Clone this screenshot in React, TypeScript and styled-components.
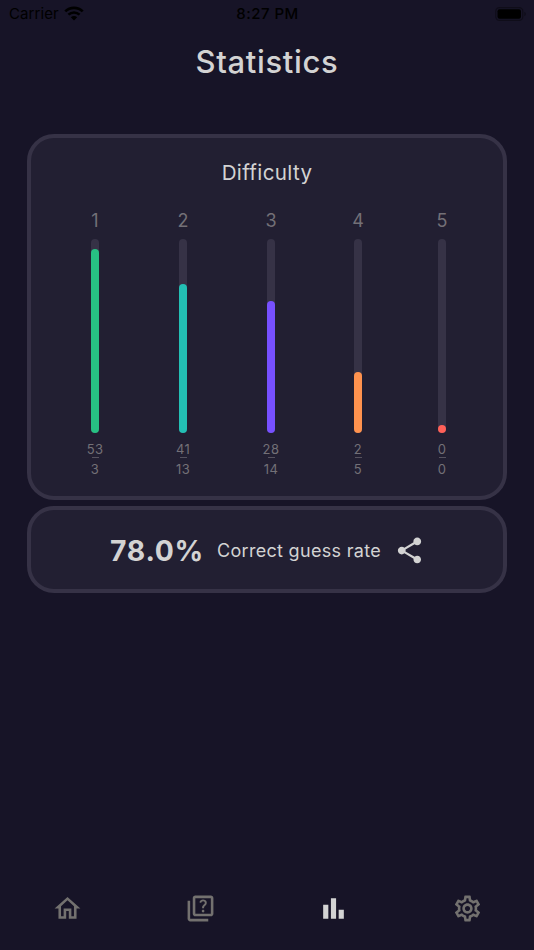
import React from 'react';
import styled, { createGlobalStyle } from 'styled-components';

const GlobalStyle = createGlobalStyle`
  * { box-sizing: border-box; }
  body { margin: 0; background: #171427; }
`;

const Screen = styled.div`
  width: 534px;
  height: 950px;
  overflow: hidden;
  display: flex;
  flex-direction: column;
  background: #171427;
  color: #d3d3d3;
  font-family: Inter, sans-serif;
`;

const StatusBar = styled.div`
  height: 27px;
  flex: none;
  padding: 0 8px 0 9px;
  display: grid;
  grid-template-columns: 1fr auto 1fr;
  align-items: center;
  color: #000;
  font-size: 15px;
  line-height: 27px;
`;

const Carrier = styled.div`
  display: flex;
  align-items: center;
  gap: 5px;
  letter-spacing: 0.1px;
`;

const Clock = styled.div`
  font-weight: 500;
  letter-spacing: 0.5px;
`;

const Battery = styled.div`
  display: flex;
  justify-content: flex-end;
`;

const Title = styled.h1`
  margin: 13px 0 0;
  height: 44px;
  flex: none;
  text-align: center;
  font-size: 31px;
  font-weight: 500;
  line-height: 44px;
  letter-spacing: 0.65px;
`;

const Cards = styled.main`
  margin: 50px 27px 0;
  display: flex;
  flex-direction: column;
  gap: 6px;
  flex: 1;
`;

const Card = styled.section`
  background: #221f32;
  border: 4px solid #363246;
  border-radius: 27px;
`;

const DifficultyCard = styled(Card)`
  height: 366px;
  padding-top: 23px;
`;

const CardTitle = styled.h2`
  margin: 0;
  text-align: center;
  font-size: 20.6px;
  font-weight: 400;
  line-height: 24px;
  letter-spacing: 0.35px;
`;

const Chart = styled.div`
  margin-top: 23px;
  padding-left: 20px;
  display: grid;
  grid-template-columns: 88px 88px 88px 86px 82px;
`;

const Level = styled.div`
  display: flex;
  flex-direction: column;
  align-items: center;
  color: #737077;
`;

const LevelName = styled.div`
  font-size: 18px;
  line-height: 25px;
`;

const Track = styled.div`
  margin-top: 6px;
  width: 8px;
  height: 194px;
  border-radius: 4px;
  background: #363246;
  display: flex;
  align-items: flex-end;
`;

const Fill = styled.div<{ $size: number; $color: string }>`
  width: 8px;
  height: ${(p) => p.$size}px;
  border-radius: 4px;
  background: ${(p) => p.$color};
`;

const Count = styled.div`
  font-size: 13px;
  line-height: 16px;
  letter-spacing: 0.4px;
`;

const Upper = styled(Count)`
  margin-top: 8px;
`;

const Divider = styled.div`
  width: 7px;
  height: 1px;
  background: #56525f;
  margin-bottom: 3px;
`;

const RateCard = styled(Card)`
  height: 87px;
  display: flex;
  align-items: center;
  padding: 2px 0 0 79px;
`;

const Rate = styled.div`
  width: 107px;
  font-size: 28.3px;
  font-weight: 700;
  letter-spacing: 0.75px;
`;

const RateLabel = styled.div`
  width: 177px;
  font-size: 18px;
  letter-spacing: 0.3px;
  white-space: nowrap;
`;

const NavBar = styled.nav`
  height: 84px;
  flex: none;
  padding-left: 0.5px;
  display: grid;
  grid-template-columns: repeat(4, 1fr);
`;

const NavItem = styled.div<{ $active?: boolean }>`
  display: flex;
  align-items: center;
  justify-content: center;
  color: ${(p) => (p.$active ? '#d3d3d3' : '#73716f')};
`;

const levels = [
  { name: '1', size: 184, color: '#27c083', right: 53, wrong: 3 },
  { name: '2', size: 149, color: '#23bfb4', right: 41, wrong: 13 },
  { name: '3', size: 132, color: '#7750ff', right: 28, wrong: 14 },
  { name: '4', size: 61, color: '#ff924e', right: 2, wrong: 5 },
  { name: '5', size: 8, color: '#ff6058', right: 0, wrong: 0 },
];

const icons = {
  home: 'M12 5.69l5 4.5V18h-2v-6H9v6H7v-7.81l5-4.5M12 3L2 12h3v8h6v-6h2v6h6v-8h3L12 3z',
  quiz: 'M4 6H2v14c0 1.1.9 2 2 2h14v-2H4V6zM20 2H8c-1.1 0-2 .9-2 2v12c0 1.1.9 2 2 2h12c1.1 0 2-.9 2-2V4c0-1.1-.9-2-2-2zm0 14H8V4h12v12zM13.51 10.16c.41-.73 1.18-1.16 1.63-1.8.48-.68.21-1.94-1.14-1.94-.88 0-1.32.67-1.5 1.23l-1.37-.57C11.51 5.96 12.52 5 13.99 5c1.23 0 2.08.56 2.51 1.26.37.6.58 1.73.01 2.57-.63.93-1.23 1.21-1.56 1.81-.13.24-.18.4-.18 1.18h-1.52c.01-.41-.06-1.08.26-1.66zM12.95 13.95c0-.59.47-1.04 1.05-1.04.59 0 1.04.45 1.04 1.04 0 .58-.44 1.05-1.04 1.05-.58 0-1.05-.47-1.05-1.05z',
  chart: 'M4 9h4v11H4zM16 13h4v7h-4zM10 4h4v16h-4z',
  settings: 'M19.43 12.98c.04-.32.07-.64.07-.98 0-.34-.03-.66-.07-.98l2.11-1.65c.19-.15.24-.42.12-.64l-2-3.46c-.09-.16-.26-.25-.44-.25-.06 0-.12.01-.17.03l-2.49 1c-.52-.4-1.08-.73-1.69-.98l-.38-2.65C14.46 2.18 14.25 2 14 2h-4c-.25 0-.46.18-.49.42l-.38 2.65c-.61.25-1.17.59-1.69.98l-2.49-1c-.06-.02-.12-.03-.18-.03-.17 0-.34.09-.43.25l-2 3.46c-.13.22-.07.49.12.64l2.11 1.65c-.04.32-.07.65-.07.98 0 .33.03.66.07.98l-2.11 1.65c-.19.15-.24.42-.12.64l2 3.46c.09.16.26.25.44.25.06 0 .12-.01.17-.03l2.49-1c.52.4 1.08.73 1.69.98l.38 2.65c.03.24.24.42.49.42h4c.25 0 .46-.18.49-.42l.38-2.65c.61-.25 1.17-.59 1.69-.98l2.49 1c.06.02.12.03.18.03.17 0 .34-.09.43-.25l2-3.46c.12-.22.07-.49-.12-.64l-2.11-1.65zm-1.98-1.71c.04.31.05.52.05.73 0 .21-.02.43-.05.73l-.14 1.13.89.7 1.08.84-.7 1.21-1.27-.51-1.04-.42-.9.68c-.43.32-.84.56-1.25.73l-1.06.43-.16 1.13-.2 1.35h-1.4l-.19-1.35-.16-1.13-1.06-.43c-.43-.18-.83-.41-1.23-.71l-.91-.7-1.06.43-1.27.51-.7-1.21 1.08-.84.89-.7-.14-1.13c-.03-.31-.05-.54-.05-.74s.02-.43.05-.73l.14-1.13-.89-.7-1.08-.84.7-1.21 1.27.51 1.04.42.9-.68c.43-.32.84-.56 1.25-.73l1.06-.43.16-1.13.2-1.35h1.39l.19 1.35.16 1.13 1.06.43c.43.18.83.41 1.23.71l.91.7 1.06-.43 1.27-.51.7 1.21-1.07.85-.89.7.14 1.13zM12 8c-2.21 0-4 1.79-4 4s1.79 4 4 4 4-1.79 4-4-1.79-4-4-4zm0 6c-1.1 0-2-.9-2-2s.9-2 2-2 2 .9 2 2-.9 2-2 2z',
  share: 'M18 16.08c-.76 0-1.44.3-1.96.77L8.91 12.7c.05-.23.09-.46.09-.7s-.04-.47-.09-.7l7.05-4.11c.54.5 1.25.81 2.04.81 1.66 0 3-1.34 3-3s-1.34-3-3-3-3 1.34-3 3c0 .24.04.47.09.7L8.04 9.81C7.5 9.31 6.79 9 6 9c-1.66 0-3 1.34-3 3s1.34 3 3 3c.79 0 1.5-.31 2.04-.81l7.12 4.16c-.05.21-.08.43-.08.65 0 1.61 1.31 2.92 2.92 2.92s2.92-1.31 2.92-2.92-1.31-2.92-2.92-2.92z',
};

function Icon({ name }: { name: keyof typeof icons }) {
  return (
    <svg width="31" height="31" viewBox="0 0 24 24" fill="currentColor">
      <path d={icons[name]} />
    </svg>
  );
}

export default function App() {
  return (
    <Screen>
      <GlobalStyle />
      <StatusBar>
        <Carrier>
          Carrier
          <svg width="20" height="15" viewBox="0 0 20 15" fill="none" stroke="#000">
            <path d="M1.3 5.4C6.1.7 13.9.7 18.7 5.4" strokeWidth="2.7" />
            <path d="M4.4 8.7C7.6 5.7 12.4 5.7 15.6 8.7" strokeWidth="2.5" />
            <path d="M10 14.4L6.8 11.2C8.6 9.6 11.4 9.6 13.2 11.2Z" fill="#000" stroke="none" />
          </svg>
        </Carrier>
        <Clock>8:27 PM</Clock>
        <Battery>
          <svg width="31" height="14" viewBox="0 0 31 14">
            <rect x="0.8" y="0.6" width="27" height="12.8" rx="3.6" fill="none" stroke="#0f0d19" strokeWidth="1.2" />
            <rect x="2.5" y="2.3" width="23.5" height="9.4" rx="2" fill="#000" />
            <path d="M29.3 4.8c2 .8 2 3.6 0 4.4z" fill="#0f0d19" />
          </svg>
        </Battery>
      </StatusBar>
      <Title>Statistics</Title>
      <Cards>
        <DifficultyCard>
          <CardTitle>Difficulty</CardTitle>
          <Chart>
            {levels.map((l) => (
              <Level key={l.name}>
                <LevelName>{l.name}</LevelName>
                <Track>
                  <Fill $size={l.size} $color={l.color} />
                </Track>
                <Upper>{l.right}</Upper>
                <Divider />
                <Count>{l.wrong}</Count>
              </Level>
            ))}
          </Chart>
        </DifficultyCard>
        <RateCard>
          <Rate>78.0%</Rate>
          <RateLabel>Correct guess rate</RateLabel>
          <Icon name="share" />
        </RateCard>
      </Cards>
      <NavBar>
        <NavItem><Icon name="home" /></NavItem>
        <NavItem><Icon name="quiz" /></NavItem>
        <NavItem $active><Icon name="chart" /></NavItem>
        <NavItem><Icon name="settings" /></NavItem>
      </NavBar>
    </Screen>
  );
}
